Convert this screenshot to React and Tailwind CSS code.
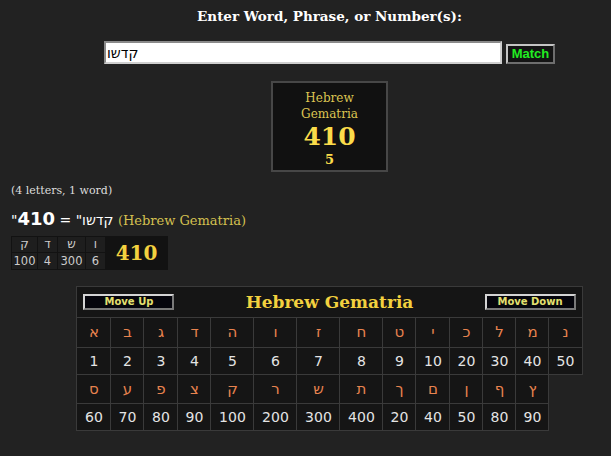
export default function App() {
  const row1 = [['א', 1], ['ב', 2], ['ג', 3], ['ד', 4], ['ה', 5], ['ו', 6], ['ז', 7], ['ח', 8], ['ט', 9], ['י', 10], ['כ', 20], ['ל', 30], ['מ', 40], ['נ', 50]];
  const row2 = [['ס', 60], ['ע', 70], ['פ', 80], ['צ', 90], ['ק', 100], ['ר', 200], ['ש', 300], ['ת', 400], ['ך', 20], ['ם', 40], ['ן', 50], ['ף', 80], ['ץ', 90]];
  const cols = ['w-[34px]', 'w-[33px]', 'w-[34px]', 'w-[33px]', 'w-[43px]', 'w-[43px]', 'w-[43px]', 'w-[43px]', 'w-[33px]', 'w-[34px]', 'w-[33px]', 'w-[33px]', 'w-[33px]', 'w-[33px]'];
  const breakdown = [['ק', 100, 'w-[25px]'], ['ד', 4, 'w-[19px]'], ['ש', 300, 'w-[27px]'], ['ו', 6, 'w-[19px]']];

  const letterCell = 'border border-[#3a3a3a] bg-[#151515] text-center text-[15px] text-[#e8834f] p-0';
  const numCell = 'border border-[#3a3a3a] bg-[#151515] text-center text-[14px] text-[#e4e4e4] p-0';
  const moveBtn = 'w-[91px] h-[16px] border-2 border-t-[#d4d4d4] border-l-[#d4d4d4] border-b-[#7a7a7a] border-r-[#7a7a7a] bg-[#05050c] text-[10px] leading-[12px] font-bold text-[#e4e070] font-[\'DejaVu_Sans\',sans-serif] flex items-center justify-center';

  return (
    <div className="w-[611px] h-[456px] overflow-hidden bg-[#222222] font-['DejaVu_Sans',sans-serif]">
      <div className="pl-[48px] flex flex-col items-center">
        <div className="pt-[6px] h-[26px] leading-[21px] text-[13.5px] font-bold text-white font-['DejaVu_Serif',serif]">
          Enter Word, Phrase, or Number(s):
        </div>
        <div className="mt-[15px] flex items-end gap-[4px]">
          <input
            readOnly
            value="קדשו"
            className="w-[398px] h-[23px] bg-white border-2 border-t-[#8a8a8a] border-l-[#8a8a8a] border-b-[#cfcfcf] border-r-[#cfcfcf] px-[1px] text-[14px] text-black outline-none font-['DejaVu_Sans',sans-serif]"
          />
          <div className="w-[49px] h-[20px] border-2 border-t-[#c4c4c4] border-l-[#c4c4c4] border-b-[#6e6e6e] border-r-[#6e6e6e] bg-[#141414] flex items-center justify-center text-[13px] font-bold text-[#22ee22] font-['Liberation_Sans',sans-serif]">
            Match
          </div>
        </div>
        <div className="mt-[17px] w-[117px] h-[91px] border-2 border-[#474747] bg-[#111111] flex flex-col items-center pt-[7px] font-['DejaVu_Serif',serif]">
          <div className="text-[12px] leading-[16px] text-[#dcc552]">Hebrew</div>
          <div className="text-[12px] leading-[16px] text-[#dcc552]">Gematria</div>
          <div className="text-[25px] leading-[30px] font-bold text-[#fbdc4a]">410</div>
          <div className="text-[13px] leading-[16px] font-bold text-[#fbdc4a]">5</div>
        </div>
      </div>

      <div className="pl-[11px]">
        <div className="mt-[11px] text-[11px] leading-[16px] text-[#dddddd] font-['DejaVu_Serif',serif]">(4 letters, 1 word)</div>
        <div className="mt-[8px] h-[24px] leading-[24px] text-[14px] text-white whitespace-nowrap flex items-baseline">
          <span>"</span>
          <span className="text-[18px] font-bold">410</span>
          <span className="whitespace-pre"> = "</span>
          <span dir="rtl">קדשו</span>
          <span className="whitespace-pre"> </span>
          <span className="text-[13px] text-[#d4c050] font-['DejaVu_Serif',serif]">(Hebrew Gematria)</span>
        </div>
        <div className="mt-[3px] inline-flex bg-[#121212] p-[1px] gap-[1px]">
          {breakdown.map(([l, n, w]) => (
            <div key={l} className={`${w} flex flex-col gap-[1px]`}>
              <div className="h-[15px] bg-[#1e1e1e] text-center text-[12px] leading-[15px] text-[#cccccc]">{l}</div>
              <div className="h-[16px] bg-[#1e1e1e] text-center text-[11.5px] leading-[16px] text-[#cccccc]">{n}</div>
            </div>
          ))}
          <div className="w-[61px] bg-[#121212] flex items-center justify-center text-[20px] font-bold text-[#f3d13f] font-['DejaVu_Serif',serif]">410</div>
        </div>
      </div>

      <div className="pl-[48px] flex flex-col items-center">
        <table className="mt-[16px] w-[505px] table-fixed border-collapse">
          <colgroup>
            {cols.map((c, i) => (
              <col key={i} className={c} />
            ))}
          </colgroup>
          <tbody>
            <tr className="h-[31px]">
              <th colSpan={14} className="border border-[#3a3a3a] bg-[#151515] p-0 px-[6px]">
                <div className="grid grid-cols-[1fr_auto_1fr] items-center">
                  <div className="justify-self-start">
                    <div className={moveBtn}>Move Up</div>
                  </div>
                  <div className="text-[17px] font-bold text-[#f3d13f] font-['DejaVu_Serif',serif] leading-[24px]">Hebrew Gematria</div>
                  <div className="justify-self-end">
                    <div className={moveBtn}>Move Down</div>
                  </div>
                </div>
              </th>
            </tr>
            <tr className="h-[30px]">
              {row1.map(([l]) => (
                <td key={l} className={letterCell}>{l}</td>
              ))}
            </tr>
            <tr className="h-[27px]">
              {row1.map(([l, n]) => (
                <td key={l} className={numCell}>{n}</td>
              ))}
            </tr>
            <tr className="h-[29px]">
              {row2.map(([l]) => (
                <td key={l} className={letterCell}>{l}</td>
              ))}
            </tr>
            <tr className="h-[27px]">
              {row2.map(([l, n]) => (
                <td key={l} className={numCell}>{n}</td>
              ))}
            </tr>
          </tbody>
        </table>
      </div>
    </div>
  );
}
